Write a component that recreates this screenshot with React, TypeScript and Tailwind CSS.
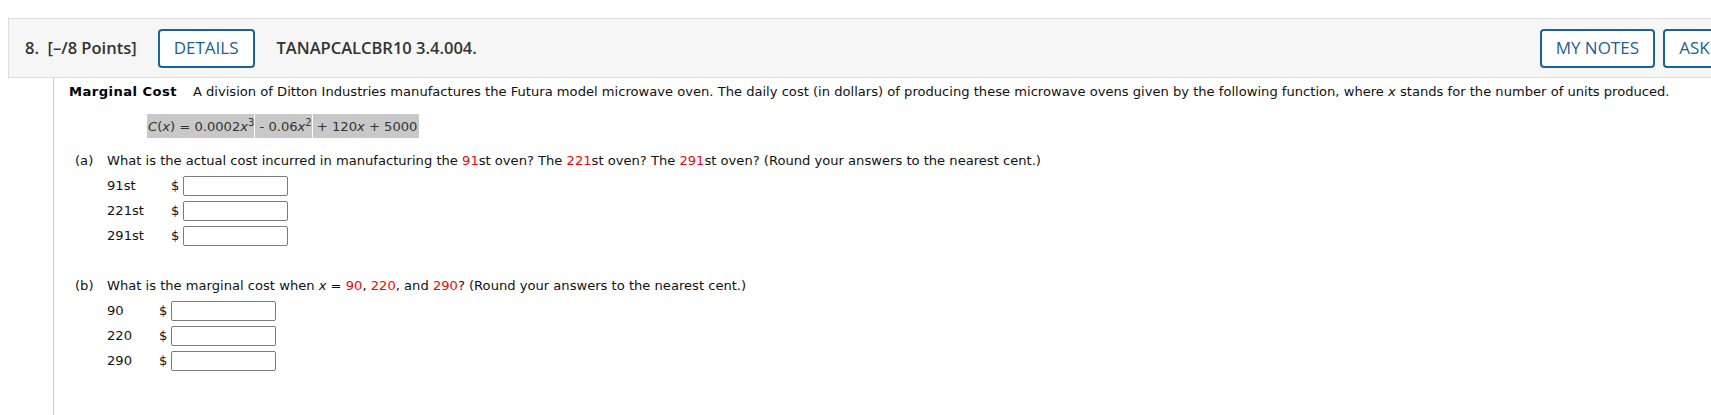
import React from 'react'

const red = 'text-[#ff0000]'

function HeaderButton({ label, className = '' }: { label: string; className?: string }) {
  return (
    <button
      className={`h-[39px] shrink-0 rounded-[4px] border-2 border-[#17649c] bg-white px-[14px] text-[17px] font-medium text-[#1d5f95] ${className}`}
    >
      {label}
    </button>
  )
}

function AnswerRow({ label, labelWidth, inputWidth }: { label: string; labelWidth: string; inputWidth: string }) {
  return (
    <div className="flex h-[20px] items-center">
      <span className={labelWidth}>{label}</span>
      <span className="w-[12px]">$</span>
      <input
        type="text"
        className={`h-[20px] ${inputWidth} rounded-[2px] border border-[#7b7b7b] bg-white`}
      />
    </div>
  )
}

export default function App() {
  return (
    <div className="w-[1711px] h-[415px] overflow-hidden bg-white">
      <div className="w-[1868px] pl-2 pt-[18px]">
        {/* question header */}
        <div className="flex h-[60px] items-center border border-[#dcdcdc] bg-[#f6f6f6] pl-[16px] font-['Open_Sans',sans-serif] text-[16.5px] font-semibold text-[#333]">
          <span>8.&nbsp; [–/8 Points]</span>
          <div className="ml-[21px]">
            <HeaderButton label="DETAILS" />
          </div>
          <span className="ml-[22px]">TANAPCALCBR10 3.4.004.</span>
          <div className="ml-auto flex gap-[8px] pr-[14px]">
            <HeaderButton label="MY NOTES" />
            <HeaderButton label="ASK YOUR TEACHER" className="w-[190px]" />
          </div>
        </div>

        {/* question body */}
        <div className="ml-[45px] h-[340px] border-l border-[#cfcfcf] pl-[15px] pt-1 font-['DejaVu_Sans',Verdana,sans-serif] text-[13.1px] text-[#111]">
          <p className="h-[20px] whitespace-nowrap leading-[20px]">
            <b className="font-bold tracking-[0.45px] text-black">Marginal Cost</b>
            <span className="inline-block w-[16px]" />
            A division of Ditton Industries manufactures the Futura model microwave oven. The daily cost (in dollars) of producing these microwave ovens given by the following function, where <i>x</i> stands for the number of units produced.
          </p>

          <div className="ml-[78px] mt-[12px] flex h-[24px] w-fit text-[#333]">
            <span className="h-[24px] bg-[#c8c8c8] pl-[1px] leading-[26px]">
              <i>C</i>(<i>x</i>) = 0.0002<i>x</i>
              <sup className="text-[10px]">3</sup>
            </span>
            <span className="ml-px h-[24px] bg-[#c8c8c8] leading-[26px]">
              &nbsp;- 0.06<i>x</i>
              <sup className="text-[10px]">2</sup>
            </span>
            <span className="ml-px h-[24px] bg-[#c8c8c8] pr-[2px] leading-[26px]">
              &nbsp;+ 120<i>x</i> + 5000
            </span>
          </div>

          <div className="mt-[13px] flex h-[20px] items-center whitespace-nowrap pl-[6px]">
            <span className="w-[32px]">(a)</span>
            <span>
              What is the actual cost incurred in manufacturing the <span className={red}>91</span>st oven? The{' '}
              <span className={red}>221</span>st oven? The <span className={red}>291</span>st oven? (Round your answers to the nearest cent.)
            </span>
          </div>
          <div className="ml-[38px] mt-[5px] flex flex-col gap-[5px]">
            <AnswerRow label="91st" labelWidth="w-[64px]" inputWidth="w-[105px]" />
            <AnswerRow label="221st" labelWidth="w-[64px]" inputWidth="w-[105px]" />
            <AnswerRow label="291st" labelWidth="w-[64px]" inputWidth="w-[105px]" />
          </div>

          <div className="mt-[30px] flex h-[20px] items-center whitespace-nowrap pl-[6px]">
            <span className="w-[32px]">(b)</span>
            <span>
              What is the marginal cost when <i>x</i> = <span className={red}>90</span>, <span className={red}>220</span>, and{' '}
              <span className={red}>290</span>? (Round your answers to the nearest cent.)
            </span>
          </div>
          <div className="ml-[38px] mt-[5px] flex flex-col gap-[5px]">
            <AnswerRow label="90" labelWidth="w-[52px]" inputWidth="w-[105px]" />
            <AnswerRow label="220" labelWidth="w-[52px]" inputWidth="w-[105px]" />
            <AnswerRow label="290" labelWidth="w-[52px]" inputWidth="w-[105px]" />
          </div>
        </div>
      </div>
    </div>
  )
}
